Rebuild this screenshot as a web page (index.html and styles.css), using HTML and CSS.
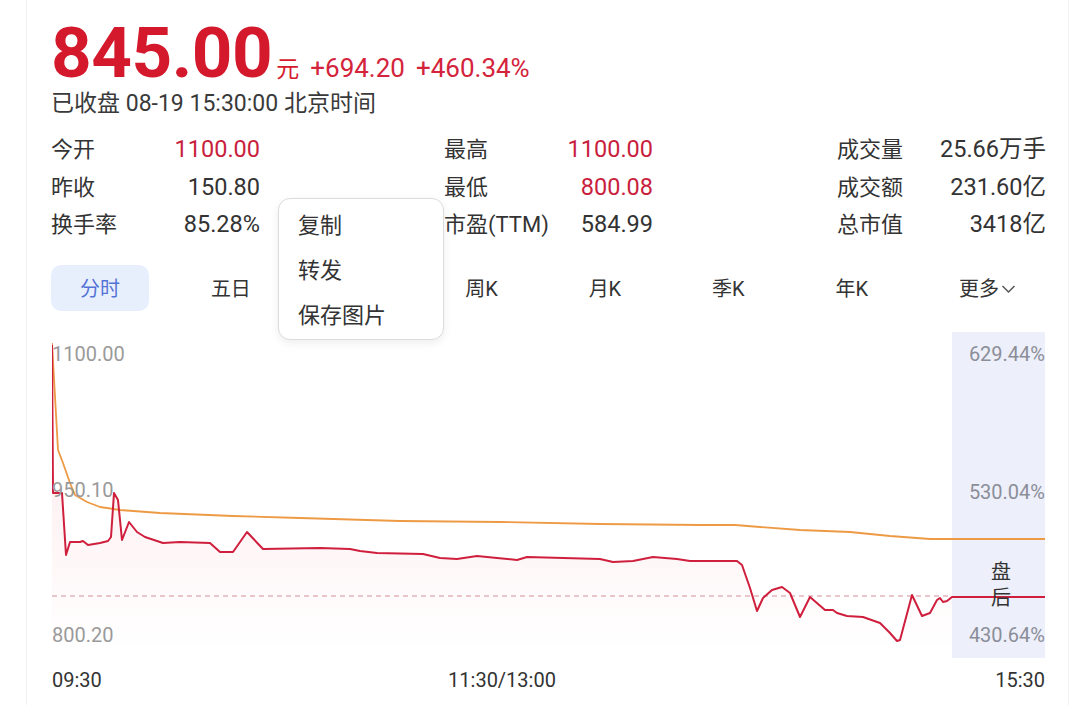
FILE: index.html
```html
<!DOCTYPE html>
<html lang="zh-CN">
<head>
<meta charset="utf-8">
<title>845.00</title>
<link rel="stylesheet" href="styles.css">
</head>
<body>
<div class="card">
  <div class="price-row">
    <span class="price">845.00</span><span class="unit">元</span><span class="chg">+694.20</span><span class="chg">+460.34%</span>
  </div>
  <div class="status">已收盘 08-19 15:30:00 北京时间</div>

  <div class="stats">
    <div class="stat"><span class="lbl">今开</span><span class="val up">1100.00</span></div>
    <div class="stat"><span class="lbl">最高</span><span class="val up">1100.00</span></div>
    <div class="stat"><span class="lbl">成交量</span><span class="val">25.66万手</span></div>
    <div class="stat"><span class="lbl">昨收</span><span class="val">150.80</span></div>
    <div class="stat"><span class="lbl">最低</span><span class="val up">800.08</span></div>
    <div class="stat"><span class="lbl">成交额</span><span class="val">231.60亿</span></div>
    <div class="stat"><span class="lbl">换手率</span><span class="val">85.28%</span></div>
    <div class="stat"><span class="lbl">市盈(TTM)</span><span class="val">584.99</span></div>
    <div class="stat"><span class="lbl">总市值</span><span class="val">3418亿</span></div>
  </div>

  <div class="tabs">
    <span class="tab active">分时</span>
    <span class="tab">五日</span>
    <span class="tab">日K</span>
    <span class="tab">周K</span>
    <span class="tab">月K</span>
    <span class="tab">季K</span>
    <span class="tab">年K</span>
    <span class="tab more">更多<svg class="chev" width="15" height="10" viewBox="0 0 15 10"><path d="M1.5 2 L7.5 8 L13.5 2" fill="none" stroke="#555" stroke-width="1.5"/></svg></span>
  </div>

  <div class="chart">
    <svg class="plot" width="993" height="330" viewBox="0 0 993 330">
      <defs>
        <linearGradient id="pinkfill" x1="0" y1="0" x2="0" y2="1">
          <stop offset="0" stop-color="#f05a70" stop-opacity="0.16"/>
          <stop offset="0.5" stop-color="#f05a70" stop-opacity="0.08"/>
          <stop offset="1" stop-color="#f05a70" stop-opacity="0"/>
        </linearGradient>
      </defs>
      <rect x="900" y="2" width="93" height="326" fill="#edf0fa"/>
      <polygon fill="url(#pinkfill)" points="0,15 1,163 10,163 14,225 18,212 28,212 31,211 36,215 48,213 56,211 59,207 62,163 66,170 70,210 77,192 85,202 93,207 111,213 128,212 158,213 168,222 181,222 195,202 211,219 268,218 298,219 308,221 325,223 371,224 388,228 405,229 425,226 445,228 465,230 475,227 548,229 561,232 581,231 601,227 625,229 638,231 685,231 690,235 698,258 705,281 711,268 720,260 730,257 738,263 748,287 758,267 773,280 781,280 785,283 795,286 811,287 828,293 838,303 845,311 848,310 860,265 870,286 878,283 885,270 888,268 891,272 895,271 900,267 900,320 0,320"/>
      <line x1="0" y1="266" x2="900" y2="266" stroke="#e2b5bd" stroke-width="1.3" stroke-dasharray="5 4"/>
      <polyline fill="none" stroke="#ee9a45" stroke-width="1.8" stroke-linejoin="round" points="0,13 6,120 11,133 18,153 23,165 35,172 48,177 68,180 108,183 181,186 248,188 348,191 448,192 548,194 648,195 683,195 708,197 748,200 798,202 838,206 878,209 993,209"/>
      <polyline fill="none" stroke="#cf1f3d" stroke-width="2" stroke-linejoin="round" points="0,15 1,163 10,163 14,225 18,212 28,212 31,211 36,215 48,213 56,211 59,207 62,163 66,170 70,210 77,192 85,202 93,207 111,213 128,212 158,213 168,222 181,222 195,202 211,219 268,218 298,219 308,221 325,223 371,224 388,228 405,229 425,226 445,228 465,230 475,227 548,229 561,232 581,231 601,227 625,229 638,231 685,231 690,235 698,258 705,281 711,268 720,260 730,257 738,263 748,287 758,267 773,280 781,280 785,283 795,286 811,287 828,293 838,303 845,311 848,310 860,265 870,286 878,283 885,270 888,268 891,272 895,271 900,267 993,267"/>
    </svg>
    <span class="ylab left l-top">1100.00</span>
    <span class="ylab left l-mid">950.10</span>
    <span class="ylab left l-bot">800.20</span>
    <span class="ylab right l-top">629.44%</span>
    <span class="ylab right l-mid">530.04%</span>
    <span class="ylab right l-bot">430.64%</span>
    <span class="after">盘<br>后</span>
  </div>

  <div class="axis">
    <span class="ax-first">09:30</span>
    <span class="ax-mid">11:30/13:00</span>
    <span></span>
    <span class="ax-last">15:30</span>
  </div>

  <div class="menu">
    <div class="menu-item">复制</div>
    <div class="menu-item">转发</div>
    <div class="menu-item">保存图片</div>
  </div>
</div>
</body>
</html>
```

FILE: styles.css
```css
* { box-sizing: border-box; }

html, body {
  margin: 0;
  padding: 0;
  background: #ffffff;
}

body {
  font-family: "Roboto", "Noto Sans CJK SC", sans-serif;
  color: #333333;
  width: 1080px;
  height: 725px;
  overflow: hidden;
}

.card {
  position: relative;
  margin-left: 26px;
  width: 1043px;
  height: 705px;
  padding: 18px 23px 0 24px;
  border-left: 1px solid #f2f2f2;
  border-right: 1px solid #f2f2f2;
  background: #fff;
}

.price-row {
  display: flex;
  align-items: baseline;
  height: 70px;
  line-height: 70px;
  white-space: nowrap;
}

.price {
  font-size: 71px;
  font-weight: 700;
  color: #d5192d;
  letter-spacing: -0.5px;
}

.unit {
  font-size: 23px;
  color: #d5192d;
  margin-left: 4px;
}

.chg {
  font-size: 26px;
  color: #d4243c;
  margin-left: 11px;
}

.status {
  margin-top: 1px;
  font-size: 23px;
  line-height: 30px;
  color: #3a3a3a;
}

.stats {
  margin-top: 12px;
  display: grid;
  grid-template-columns: repeat(3, 1fr);
  column-gap: 184px;
  width: 995px;
}

.stat {
  display: flex;
  justify-content: space-between;
  align-items: baseline;
  height: 37.5px;
  line-height: 37.5px;
  font-size: 22px;
}

.lbl { color: #333; }
.val { color: #333; font-size: 23.5px; }
.val.up { color: #c91e3e; }

.tabs {
  margin-top: 21px;
  display: flex;
  justify-content: space-between;
  width: 995px;
}

.tab {
  display: flex;
  align-items: center;
  height: 46px;
  padding: 0 29px;
  font-size: 20px;
  color: #333;
  border-radius: 10px;
}

.tab.more { padding-right: 30px; }

.tab.active {
  background: #e8effc;
  color: #5473d6;
}

.chev {
  margin-left: 2px;
  margin-top: 2px;
}

.chart {
  position: relative;
  margin-top: 19px;
  margin-left: 1px;
  height: 330px;
  width: 993px;
}

.plot {
  display: block;
}

.ylab {
  position: absolute;
  font-size: 20px;
  line-height: 24px;
  color: #9a9a9a;
}

.ylab.left { left: 0; }
.ylab.right { right: 0; color: #8b8e99; }

.l-top { top: 12px; }
.l-mid { top: 148px; }
.l-bot { top: 293px; }
.ylab.right.l-mid { top: 150px; }

.after {
  position: absolute;
  right: 34px;
  top: 229px;
  font-size: 20px;
  line-height: 26px;
  color: #333;
  text-align: center;
}

.axis {
  margin-top: 8px;
  margin-left: 1px;
  display: grid;
  grid-template-columns: 1fr auto 1fr 93px;
  width: 993px;
  font-size: 20px;
  line-height: 24px;
  color: #333;
}

.ax-first { text-align: left; }
.ax-mid { text-align: center; }
.ax-last { text-align: right; }

.menu {
  position: absolute;
  left: 251px;
  top: 198px;
  width: 166px;
  height: 142px;
  padding: 4px 0 0 19px;
  background: #ffffff;
  border: 1px solid #dcdcdc;
  border-radius: 12px;
  box-shadow: 0 3px 10px rgba(0, 0, 0, 0.07);
}

.menu-item {
  height: 45px;
  line-height: 45px;
  font-size: 22px;
  color: #333;
}
```
